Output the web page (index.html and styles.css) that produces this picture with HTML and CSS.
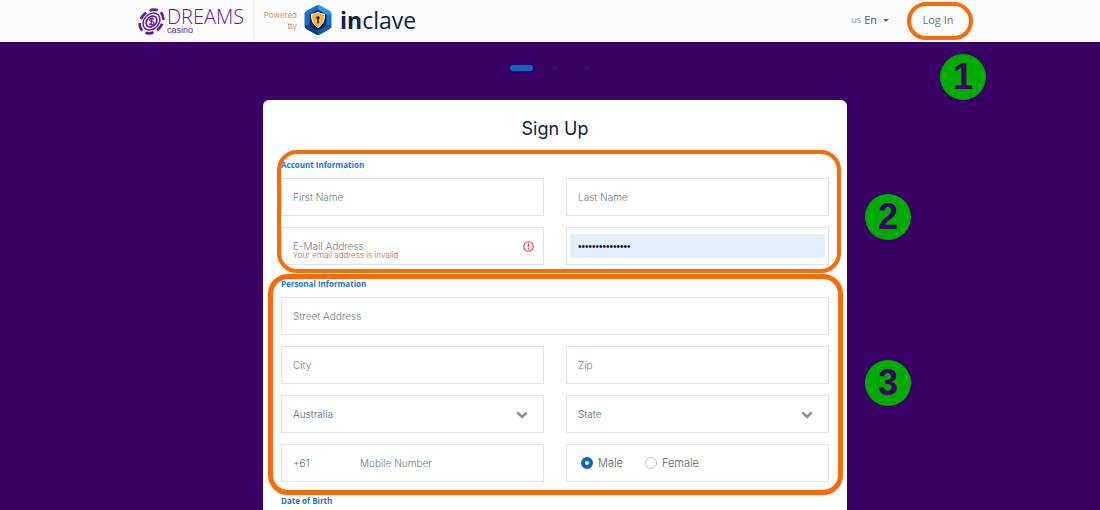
FILE: index.html
```html
<!DOCTYPE html>
<html lang="en">
<head>
<meta charset="utf-8">
<title>Sign Up</title>
<link rel="stylesheet" href="styles.css">
</head>
<body>
<header class="topbar">
  <div class="topbar-inner">
    <div class="brand">
      <svg class="chip" viewBox="0 0 28 28" aria-hidden="true">
        <g fill="none" stroke="#5f1a9e" transform="rotate(-45 14 14)">
          <ellipse cx="14" cy="14" rx="13.6" ry="10.6" stroke-width="2.800" stroke-dasharray="8.600 4.100"/>
          <ellipse cx="14" cy="14" rx="9.800" ry="7.600" stroke-width="1.500"/>
          <ellipse cx="14" cy="14" rx="6.300" ry="4.800" stroke-width="1.800"/>
        </g>
        <path d="M16.600 11.800c-2-1.700-5-.8-4.600.8s4.400 1.400 4.600 3.100-2.900 2.200-5 .7M14.800 9.800l-1.500 8.400" fill="none" stroke="#5f1a9e" stroke-width="1.300"/>
      </svg>
      <div class="brand-text">
        <span class="brand-name">DREAMS</span>
        <span class="brand-sub">casino</span>
      </div>
    </div>
    <div class="partner">
      <span class="powered">Powered<br>by</span>
      <svg class="hex" viewBox="0 0 28 30" aria-hidden="true">
        <path d="M12.200.6q1.800-1 3.600 0l9.800 5.400q1.900 1.100 1.900 3.200v11.600q0 2.100-1.900 3.200l-9.800 5.400q-1.800 1-3.600 0l-9.800-5.400Q.5 22.900.5 20.800V9.200Q.5 7.100 2.400 6z" fill="#1673c8"/>
        <path d="M14 0q1 .1 1.800.6l9.800 5.400q1.900 1.100 1.900 3.200L21 10 14 6.500z" fill="#2b9ae8"/>
        <path d="M.5 20.800Q.5 22.900 2.400 24l9.800 5.400q.8.500 1.800.6V23l-7-4z" fill="#0b3c82"/>
        <path d="M14 30q1-.1 1.800-.6l9.800-5.400q1.900-1.100 1.900-3.200L21 19l-7 4z" fill="#0e5bab"/>
        <path d="M14 4.500l8.500 5v11L14 25.500l-8.500-5v-11z" fill="#0a2a5e"/>
        <path d="M14 7.200q3 1.900 6.600 2.100 0 9.700-6.600 13.200Q7.400 19 7.400 9.300 11 9.100 14 7.200z" fill="#ffb21f" stroke="#fff" stroke-width="1"/>
        <path d="M14 11.200a1.700 1.700 0 0 1 .8 3.200v3.800h-1.600v-3.800a1.700 1.700 0 0 1 .8-3.200z" fill="#0a2a5e"/>
      </svg>
      <span class="inclave"><b>in</b>clave</span>
    </div>
    <nav class="actions">
      <button class="lang" type="button"><small>US</small> En <span class="caret"></span></button>
      <div class="login-wrap">
        <button class="login" type="button">Log In</button>
        <span class="ring ring-login"></span>
        <span class="step step-login">1</span>
      </div>
    </nav>
  </div>
</header>

<main class="page">
  <div class="progress" aria-hidden="true"><i class="active"></i><i></i><i></i></div>
  <form class="card">
    <h1>Sign Up</h1>

    <section class="group">
      <h2>Account Information</h2>
      <div class="fields">
        <div class="field"><input type="text" placeholder="First Name" aria-label="First Name"></div>
        <div class="field"><input type="text" placeholder="Last Name" aria-label="Last Name"></div>
        <div class="field">
          <input type="email" placeholder="E-Mail Address" aria-label="E-Mail Address" aria-describedby="email-error">
          <span class="error" id="email-error">Your email address is invalid</span>
          <svg class="alert" viewBox="0 0 10 10" aria-hidden="true"><circle cx="5" cy="5" r="4.300" fill="none" stroke="#d5404c"/><path d="M5 2.300v3.400M5 6.600v1.200" stroke="#d5404c" stroke-width="1.200"/></svg>
        </div>
        <div class="field autofilled"><input type="password" value="dreamscasino123" aria-label="Password"></div>
      </div>
      <span class="ring ring-account"></span>
      <span class="step step-account">2</span>
    </section>

    <section class="group">
      <h2>Personal Information</h2>
      <div class="fields">
        <div class="field wide"><input type="text" placeholder="Street Address" aria-label="Street Address"></div>
        <div class="field"><input type="text" placeholder="City" aria-label="City"></div>
        <div class="field"><input type="text" placeholder="Zip" aria-label="Zip"></div>
        <div class="field">
          <select aria-label="Country"><option>Australia</option></select>
          <svg class="chevron" viewBox="0 0 12 8" aria-hidden="true"><path d="M1.300 1.300L6 6l4.700-4.700" fill="none" stroke="#8b9096" stroke-width="2.600"/></svg>
        </div>
        <div class="field">
          <select aria-label="State"><option>State</option></select>
          <svg class="chevron" viewBox="0 0 12 8" aria-hidden="true"><path d="M1.300 1.300L6 6l4.700-4.700" fill="none" stroke="#8b9096" stroke-width="2.600"/></svg>
        </div>
        <div class="field phone">
          <input class="code" type="text" value="+61" aria-label="Country code">
          <input type="tel" placeholder="Mobile Number" aria-label="Mobile Number">
        </div>
        <div class="field genders">
          <label><input type="radio" name="gender" checked>Male</label>
          <label><input type="radio" name="gender">Female</label>
        </div>
      </div>
      <span class="ring ring-personal"></span>
      <span class="step step-personal">3</span>
    </section>

    <section class="group">
      <h2>Date of Birth</h2>
    </section>
  </form>
</main>
</body>
</html>
```
FILE: styles.css
```css
* { box-sizing: border-box; }

body {
  margin: 0;
  min-height: 100vh;
  display: flex;
  flex-direction: column;
  background: #390066;
  color: #5f6e7c;
  font-family: Inter, "Open Sans", sans-serif;
  font-size: 10px;
  font-weight: 300;
}

button, input, select { font: inherit; color: inherit; }
button { border: 0; padding: 0; background: none; }

/* Top bar */
.topbar { background: #fcfcfd; padding-left: 10px; }
.topbar-inner {
  display: flex;
  align-items: center;
  max-width: 834px;
  height: 42px;
  margin: 0 auto;
}
.brand {
  display: flex;
  align-items: center;
  gap: 2px;
  height: 40px;
  padding-right: 12px;
  border-right: 1px solid #f1f1f5;
  color: #5f1a9e;
}
.chip { width: 27px; height: 27px; }
.brand-text { display: flex; flex-direction: column; width: 74px; }
.brand-name { font: 300 20px/18px "Open Sans", sans-serif; }
.brand-sub { font: 9px/9px "Liberation Sans", sans-serif; }
.partner { display: flex; align-items: center; }
.powered {
  width: 43px;
  text-align: right;
  font-size: 8px;
  font-weight: 400;
  line-height: 11px;
  color: #f58a55;
}
.hex { width: 28px; height: 30px; margin: 0 8px 2px 7px; }
.inclave { padding-bottom: 2px; font: 400 23px/30px "Open Sans", sans-serif; color: #0b1f4b; }
.inclave b { font-weight: 700; }
.actions {
  display: flex;
  align-items: center;
  margin-left: auto;
  padding-bottom: 2px;
  font: 11px/16px "Open Sans", sans-serif;
  color: #6c7681;
}
.lang { display: flex; align-items: center; gap: 3px; margin-right: 19px; color: #4f5f72; }
.lang small { font-size: 8px; color: #8a929a; }
.caret {
  margin-left: 3px;
  border: 3px solid transparent;
  border-top-color: #5f6973;
  border-bottom: 0;
}
.login-wrap { position: relative; }
.login { width: 64px; height: 38px; padding-right: 4px; }

/* Callouts lying over the page */
.ring {
  position: absolute;
  border: 4px solid #fb6a08;
  border-radius: 20px;
  pointer-events: none;
}
.ring-login { inset: 1px -1px -1px -1px; }
.ring-account { inset: -9px -12px -8px -4px; }
.ring-personal { inset: -4px -14px -13px -13px; border-width: 5px; }
.step {
  position: absolute;
  width: 46px;
  height: 46px;
  border-radius: 50%;
  background: #00ab00;
  color: #390066;
  font: 700 36px/46px "Liberation Sans", sans-serif;
  text-align: center;
}
.step-login { top: 53px; right: -14px; }
.step-account { top: 35px; right: -82px; }
.step-personal { top: 82px; right: -82px; }

/* Sign-up card */
.page {
  flex: 1;
  display: flex;
  flex-direction: column;
  align-items: center;
  padding: 23px 0 0 10px;
}
.progress { display: flex; gap: 19px; margin-bottom: 29px; padding-right: 10px; }
.progress i { width: 6px; height: 6px; border-radius: 3px; background: #34146c; }
.progress i + i + i { margin-left: 7px; }
.progress .active { width: 23px; background: #0a67bd; }
.card {
  flex: 1;
  display: flex;
  flex-direction: column;
  gap: 13px;
  width: 100%;
  max-width: 584px;
  padding: 15px 18px 3px;
  border-radius: 6px 6px 0 0;
  background: #fff;
}
h1 {
  margin: 0 0 3px;
  font-size: 18px;
  font-weight: 400;
  line-height: 28px;
  text-align: center;
  color: #0b1f4b;
}
.group { position: relative; }
h2 {
  margin: 0;
  font-family: "Open Sans", sans-serif;
  font-size: 8px;
  font-weight: 700;
  line-height: 12px;
  color: #1877d8;
}
.fields {
  display: grid;
  grid-template-columns: 1fr 1fr;
  gap: 11px 22px;
  margin-top: 7px;
}
.field {
  position: relative;
  display: flex;
  height: 38px;
  border: 1px solid #dfe4e7;
}
.wide { grid-column: 1 / -1; }
.field input:not([type="radio"]), select {
  flex: 1;
  min-width: 0;
  padding: 0 11px;
  border: 0;
  border-radius: 0;
  background: none;
  outline: 0;
  appearance: none;
}
::placeholder { color: #6f7e8b; opacity: 1; }
select { color: #55636f; }
.error {
  position: absolute;
  left: 11px;
  bottom: 4px;
  font-size: 8px;
  line-height: 10px;
  color: #e0503f;
}
.alert { position: absolute; right: 9px; top: 13px; width: 11px; height: 11px; }
.chevron { position: absolute; right: 15px; top: 15px; width: 12px; height: 8px; pointer-events: none; }
.autofilled { padding: 6px 3px; }
.field.autofilled input {
  padding: 0 8px;
  background: #e3effd;
  color: #111;
  font: 10px "Liberation Sans", sans-serif;
}
.field.phone .code { flex: 0 0 67px; }
.genders { align-items: center; gap: 22px; padding-left: 14px; font-size: 11px; color: #55636f; }
.genders label { display: flex; align-items: center; gap: 5px; }
.genders input {
  width: 12px;
  height: 12px;
  margin: 0;
  border: 1px solid #c3cad0;
  border-radius: 50%;
  background: #fff;
  appearance: none;
}
.genders input:checked { border: 4px solid #0a67bd; }
```
